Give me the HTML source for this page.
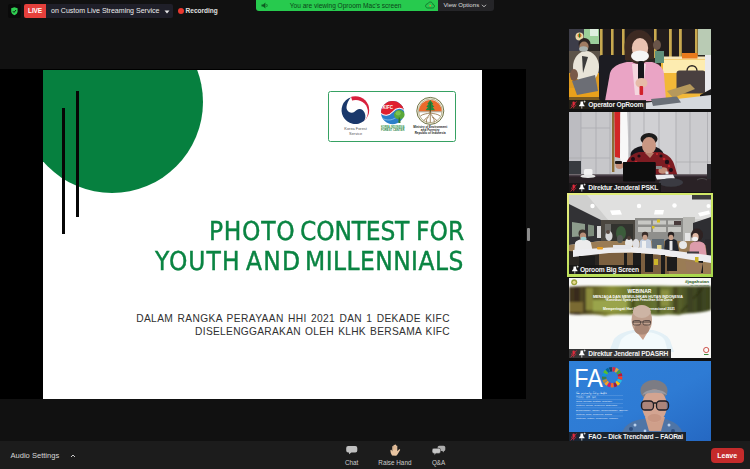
<!DOCTYPE html>
<html lang="en">
<head>
<meta charset="utf-8">
<title>Zoom Webinar - Photo Contest for Youth and Millennials</title>
<style>
html,body{margin:0;padding:0;}
body{width:750px;height:469px;background:#111111;position:relative;overflow:hidden;font-family:"Liberation Sans",Arial,sans-serif;color:#fff;}
.abs{position:absolute;}
/* top-left */
#shield{left:8px;top:4px;width:13px;height:14px;background:#0a0a0a;border-radius:2px;}
#live{left:24px;top:4px;width:22px;height:14px;background:#e5403c;border-radius:2px 0 0 2px;font-size:6.5px;font-weight:bold;line-height:14.4px;text-align:center;letter-spacing:-0.15px;}
#stream{left:46px;top:4px;width:127px;height:14px;background:#1f1f29;border-radius:0 2px 2px 0;font-size:7.05px;line-height:14px;color:#ececec;white-space:nowrap;}
#stream span{position:absolute;left:5px;top:0;}
#rec{left:185.6px;top:4px;height:14px;line-height:14px;font-size:6.5px;font-weight:bold;color:#e0e0e0;white-space:nowrap;}
#recdot{left:177.5px;top:8px;width:6px;height:6px;border-radius:50%;background:#e8392f;}
/* banner */
#banner{left:255.5px;top:0;width:183px;height:11.2px;background:#27ca4e;border-radius:0 0 0 3px;font-size:6.55px;line-height:11px;color:#0c4519;white-space:nowrap;}
#viewopt{left:438.4px;top:0;width:55.5px;height:11.1px;background:#252528;border-radius:0 0 3px 0;font-size:6.1px;line-height:10.6px;color:#dedede;white-space:nowrap;}
/* slide */
#stage{left:0;top:69.4px;width:526px;height:329.7px;background:#000;}
#slide{left:43.2px;top:0.5px;width:438.8px;height:328.7px;background:#fff;overflow:hidden;}
#circle{left:-22px;top:-59px;width:182px;height:182px;border-radius:50%;background:#06803f;}
.vline{background:#060606;width:2.6px;}
#logos{left:285px;top:21.5px;width:128px;height:51px;border:1.3px solid #36a162;border-radius:2.5px;box-sizing:border-box;background:#fff;}
.tw{position:absolute;color:#0a8442;font-family:"DejaVu Sans Condensed","DejaVu Sans","Liberation Sans",sans-serif;font-size:26px;line-height:30px;white-space:nowrap;-webkit-text-stroke:0.4px #0a8442;text-rendering:geometricPrecision;will-change:transform;}
.sub{position:absolute;color:#303030;font-size:10.2px;line-height:12px;white-space:nowrap;text-align:right;right:32px;}
#handle{left:527px;top:228px;width:2.6px;height:13px;background:#8c8c8c;border-radius:1px;}
/* thumbs */
.thumb{position:absolute;left:569px;width:142px;height:80px;overflow:hidden;background:#444;}
.thumb svg{position:absolute;left:0;top:0;}
.lbl{position:absolute;left:0;bottom:0;height:9.5px;background:rgba(22,22,22,.86);font-size:6.7px;line-height:9.6px;font-weight:bold;color:#f2f2f2;white-space:nowrap;padding:0 2.5px 0 19.3px;letter-spacing:-0.22px}
/* toolbar */
#toolbar{left:0;top:441px;width:750px;height:28px;background:#1c1c1c;}
.tl{position:absolute;font-size:6.35px;color:#cdcdcd;white-space:nowrap;transform:translateX(-50%);top:17.5px;line-height:8px;}
#leave{left:711px;top:7px;width:32.5px;height:15px;border-radius:4px;background:#c42b2b;font-size:7px;font-weight:bold;line-height:15px;text-align:center;color:#fff;}
</style>
</head>
<body>
<!-- top-left -->
<div id="shield" class="abs"><svg width="13" height="14" viewBox="0 0 13 14"><path d="M6.4 3.2 L9.6 4.3 V7.2 C9.6 9.2 8.2 10.5 6.4 11.2 C4.6 10.5 3.2 9.2 3.2 7.2 V4.3 Z" fill="#2fd052"/><path d="M4.9 7.2 L6 8.4 L8 6" stroke="#0a0a0a" stroke-width="0.9" fill="none"/></svg></div>
<div id="live" class="abs">LIVE</div>
<div id="stream" class="abs"><span>on Custom Live Streaming Service</span><svg class="abs" style="left:118px;top:5.5px" width="6" height="4" viewBox="0 0 6 4"><path d="M0.5 0.5 H5.5 L3 3.5 Z" fill="#e8e8e8"/></svg></div>
<div id="recdot" class="abs"></div>
<div id="rec" class="abs">Recording</div>
<!-- banner -->
<div id="banner" class="abs"><svg class="abs" style="left:5px;top:2px" width="9" height="7" viewBox="0 0 9 7"><path d="M0.5 2.4 H2.2 L4.4 0.6 V6.4 L2.2 4.6 H0.5 Z" fill="#0d5a20"/><path d="M5.6 2 Q6.8 3.5 5.6 5" stroke="#0d5a20" stroke-width="0.8" fill="none"/></svg><span class="abs" style="left:34.3px;top:0">You are viewing Oproom Mac's screen</span><svg class="abs" style="left:169px;top:1px" width="10" height="8" viewBox="0 0 10 8"><path d="M2.6 7 H7.6 C8.8 7 9.5 6.2 9.5 5.2 C9.5 4.2 8.8 3.6 7.9 3.5 C7.8 2 6.7 1 5.3 1 C4.1 1 3.2 1.7 2.8 2.8 C1.6 2.8 0.6 3.7 0.6 4.9 C0.6 6.1 1.5 7 2.6 7 Z" fill="none" stroke="#0f6a28" stroke-width="0.8"/><circle cx="5.2" cy="4.6" r="0.9" fill="#d88a30"/></svg></div>
<div id="viewopt" class="abs"><span class="abs" style="left:5px;top:0">View Options</span><svg class="abs" style="left:42.6px;top:3.6px" width="6" height="4" viewBox="0 0 6 4"><path d="M1 0.8 L3 2.8 L5 0.8" stroke="#e6e6e6" stroke-width="0.8" fill="none"/></svg></div>

<!-- shared screen -->
<div id="stage" class="abs">
 <div id="slide" class="abs">
  <div id="circle" class="abs"></div>
  <div class="abs vline" style="left:19.2px;top:38px;height:126px"></div>
  <div class="abs vline" style="left:33.2px;top:21px;height:126px"></div>
  <div id="logos" class="abs"><svg class="abs" style="left:-1.3px;top:-1.3px" width="128" height="51" viewBox="328 91.5 128 51">
   <!-- Korea Forest Service -->
   <g>
    <clipPath id="kr"><path d="M350.6 96 L372 96 L372 125 L364.3 122.3 L355 110 Z"/></clipPath><circle cx="355.4" cy="110.6" r="13.8" fill="#d8203c" clip-path="url(#kr)"/>
    <circle cx="355.8" cy="112.6" r="12.1" fill="#fff"/>
    <path d="M350.98 97.67 A13.8 13.8 0 1 0 363.94 121.55 C365.6 119.5 365.9 116 364.6 113.2 C363.5 110.8 361.5 109.3 359.5 109.5 C357.5 109.7 355.8 111.2 354.2 112.5 C352.8 113.4 350.5 113.4 349 112.4 C347.3 111.3 346.3 109.5 346.5 107.5 C346.8 104.5 348.2 100.7 350.98 97.67 Z" fill="#1a386b"/>
    <text x="355.6" y="130.3" font-size="3.9" fill="#555" text-anchor="middle" font-family="Liberation Sans, sans-serif">Korea Forest</text>
    <text x="355.6" y="135.4" font-size="3.9" fill="#555" text-anchor="middle" font-family="Liberation Sans, sans-serif">Service</text>
   </g>
   <!-- KIFC -->
   <g>
    <clipPath id="kc"><circle cx="392.6" cy="113.1" r="11.6"/></clipPath>
    <g clip-path="url(#kc)">
     <rect x="380" y="100" width="26" height="26" fill="#2b7fc9"/>
     <path d="M380 100 H406 V113 C402 106.5 396 108.5 392.5 112.5 C389 116.5 384 117 380 113 Z" fill="#e0202f"/>
     <path d="M380 113 C384 117 389 116.5 392.5 112.5 C396 108.5 402 106.5 406 113" stroke="#fff" stroke-width="1.1" fill="none"/>
     <path d="M382 118.5 C386 121.5 392 121 396 118" stroke="#9fd0f0" stroke-width="0.7" fill="none"/>
    </g>
    <ellipse cx="399.3" cy="115.2" rx="5.3" ry="4.7" fill="#5aa83a"/>
    <ellipse cx="398.2" cy="113.8" rx="2.6" ry="2.2" fill="#7cc24e"/>
    <path d="M398.7 118 L398.3 123.6 H400.5 L400 118 Z" fill="#2f7a2c"/>
    <text x="387.8" y="109.3" font-size="5.2" font-weight="bold" fill="#fff" text-anchor="middle" font-family="Liberation Sans, sans-serif" textLength="10.4" lengthAdjust="spacingAndGlyphs">KIFC</text>
    <text x="392.7" y="128.3" font-size="2.7" font-weight="bold" fill="#2c9046" text-anchor="middle" font-family="Liberation Sans, sans-serif" textLength="23.5" lengthAdjust="spacingAndGlyphs">KOREA-INDONESIA</text>
    <text x="392.7" y="131.2" font-size="2.9" font-weight="bold" fill="#1f7f3c" text-anchor="middle" font-family="Liberation Sans, sans-serif" textLength="23.5" lengthAdjust="spacingAndGlyphs">FOREST CENTER</text>
   </g>
   <!-- Ministry of Environment and Forestry -->
   <g>
    <circle cx="430.3" cy="111.4" r="13.5" fill="#f6f1e2" stroke="#6f7448" stroke-width="1"/>
    <circle cx="430.3" cy="111.4" r="11.8" fill="#fff" stroke="#8c8458" stroke-width="0.6"/>
    <path d="M418.9 111.8 A11.4 11.4 0 0 1 441.7 111.8 Z" fill="#ea6a2c"/>
    <path d="M430.3 100.6 L427.3 104.6 H428.5 L426.3 107.6 H428 L425.6 110.8 H435 L432.6 107.6 H434.3 L432.1 104.6 H433.3 Z" fill="#1f8a3c"/>
    <rect x="429.7" y="103" width="1.2" height="10" fill="#3a5a2a"/>
    <path d="M419 112.3 H441.6" stroke="#6b5a3a" stroke-width="0.6"/>
    <g stroke="#8a6a3c" stroke-width="0.8" fill="none">
     <path d="M430.3 112.5 C429.8 116 427 118 423.5 121.3"/>
     <path d="M430.3 112.5 C430.8 116 433.6 118 437.1 121.3"/>
     <path d="M430.3 112.5 V123.3"/>
     <path d="M429.6 113.5 C427 114.5 423.5 114 420.3 116.6"/>
     <path d="M431 113.5 C433.6 114.5 437.1 114 440.3 116.6"/>
     <path d="M428.6 117.3 C426.5 119 426 121 426.6 123"/>
     <path d="M432 117.3 C434.1 119 434.6 121 434 123"/>
    </g>
    <text x="430.2" y="128.6" font-size="3.1" font-weight="bold" fill="#222" text-anchor="middle" font-family="Liberation Sans, sans-serif" textLength="34" lengthAdjust="spacingAndGlyphs">Ministry of Environment</text>
    <text x="430.2" y="131.7" font-size="3.1" font-weight="bold" fill="#222" text-anchor="middle" font-family="Liberation Sans, sans-serif">and Forestry</text>
    <text x="430.2" y="134.9" font-size="3.1" font-weight="bold" fill="#222" text-anchor="middle" font-family="Liberation Sans, sans-serif" textLength="31" lengthAdjust="spacingAndGlyphs">Republic of Indonesia</text>
   </g>
  </svg></div>
  <span class="tw" id="w1" style="left:166.30px;top:146.8px;letter-spacing:0.70px">PHOTO</span>
  <span class="tw" id="w2" style="left:257.10px;top:146.8px;letter-spacing:-0.18px">CONTEST</span>
  <span class="tw" id="w3" style="left:373.00px;top:146.8px;letter-spacing:0.09px">FOR</span>
  <span class="tw" id="w4" style="left:111.60px;top:177.3px;letter-spacing:1.05px">YOUTH</span>
  <span class="tw" id="w5" style="left:202.40px;top:177.3px;letter-spacing:1.26px">AND</span>
  <span class="tw" id="w6" style="left:262.30px;top:177.3px;letter-spacing:0.46px">MILLENNIALS</span>
  <div class="sub" id="s1" style="top:243.6px;letter-spacing:0.4px;word-spacing:1px">DALAM RANGKA PERAYAAN HHI 2021 DAN 1 DEKADE KIFC</div>
  <div class="sub" id="s2" style="top:256.2px;letter-spacing:0.3px;word-spacing:1px">DISELENGGARAKAN OLEH KLHK BERSAMA KIFC</div>
 </div>
</div>
<div id="handle" class="abs"></div>

<!-- thumbnails -->
<div class="thumb" id="t1" style="top:29px"><svg width="142" height="80" viewBox="0 0 142 80">
 <defs><filter id="b1" x="-5%" y="-5%" width="110%" height="110%"><feGaussianBlur stdDeviation="0.55"/></filter></defs>
 <rect width="142" height="80" fill="#2b2723"/>
 <g filter="url(#b1)">
  <rect x="0" y="0" width="17" height="22" fill="#3d3d49"/>
  <rect x="15" y="0" width="16" height="15" fill="#9ccf9a"/>
  <rect x="21" y="0" width="8" height="7" fill="#dfeee0"/>
  <rect x="30" y="0" width="98" height="29" fill="#231f1c"/><circle cx="10.500" cy="7.500" r="4" fill="#e8d8a8"/><circle cx="10.500" cy="6.500" r="2" fill="#d8742a"/><rect x="10" y="4.500" width="1.200" height="4" fill="#2a7a2a"/>
  <g fill="#c9a94f">
   <rect x="31" y="0" width="2.6" height="29"/><rect x="42" y="0" width="2.6" height="29"/><rect x="53" y="0" width="2.6" height="26"/>
   <rect x="85" y="0" width="2.6" height="29"/><rect x="100" y="0" width="2.8" height="29"/><rect x="110" y="0" width="2.8" height="29"/><rect x="126" y="0" width="2.6" height="29"/>
  </g>
  <rect x="129" y="0" width="13" height="26" fill="#b9cbb4"/>
  <!-- yellow shelf -->
  <rect x="92" y="29" width="50" height="42" fill="#f2b838"/>
  <rect x="94" y="31" width="42" height="13" fill="#fdecb0"/>
  <rect x="92" y="27.5" width="50" height="3" fill="#f6e6b8"/>
  <rect x="113" y="24" width="15.5" height="5.5" fill="#e87a1c"/>
  <!-- bag -->
  <path d="M118 42 C118 35 128 35 128 42" stroke="#2c2523" stroke-width="1.4" fill="none"/>
  <rect x="107.5" y="41.5" width="29" height="23" rx="3" fill="#4a4140"/>
  <rect x="136" y="26" width="6" height="37" fill="#e9e9ec"/>
  <path d="M131 66 L142 60 V68 L131 70 Z" fill="#1f1c1c"/>
  <!-- left man -->
  <rect x="0" y="22" width="31" height="24" fill="#5c5248"/><rect x="0" y="44" width="33" height="18" fill="#dc9a24"/>
  <rect x="0" y="59" width="33" height="11" fill="#e9a11d"/>
  <rect x="0" y="68" width="33" height="12" fill="#7a5a20"/>
  <ellipse cx="17" cy="38" rx="13" ry="16" fill="#e8e4d8"/>
  <path d="M3 52 L26 46 L29 62 L8 66 Z" fill="#6c6e75"/>
  <circle cx="15.5" cy="15" r="6" fill="#2c2421"/>
  <ellipse cx="15" cy="17.5" rx="4.6" ry="5" fill="#a07a62"/>
  <ellipse cx="14.5" cy="20" rx="4.4" ry="2.8" fill="#a9b0ae"/>
  <path d="M13 27 L19 28 L14 44 Z" fill="#3a3a3a"/>
  <ellipse cx="5" cy="46" rx="4" ry="6" fill="#7a5a48"/>
  <!-- chair -->
  <rect x="30" y="26" width="27" height="46" rx="3" fill="#1c1c21"/>
  <!-- woman -->
  <path d="M36 72 L41 44 C43 37 52 34 58 33 H83 C90 35 94 38 95 45 L97 72 Z" fill="#eaa4c5"/>
  <path d="M63 35 H77 L73 66 H66 Z" fill="#f4d6de"/>
  <ellipse cx="70" cy="18" rx="14.5" ry="17" fill="#3c2922"/>
  <rect x="56" y="18" width="6" height="13" fill="#3c2922"/>
  <rect x="79" y="18" width="6" height="12" fill="#3c2922"/>
  <ellipse cx="71" cy="19" rx="8.2" ry="10" fill="#e9c2b0"/>
  <ellipse cx="71" cy="27" rx="9" ry="5.6" fill="#f5f5f5"/>
  <rect x="69" y="32" width="6" height="19" rx="2" fill="#19191b"/>
  <ellipse cx="72.5" cy="54" rx="6" ry="5" fill="#e6bba8"/>
  <rect x="70.5" y="57" width="3.6" height="9" rx="1" fill="#d1202c"/>
  <!-- right arm person at back -->
  <ellipse cx="88" cy="16" rx="4" ry="5" fill="#6a5448"/>
  <rect x="86" y="22" width="9" height="12" fill="#5f8f7a"/>
  <!-- table, laptop, folder -->
  <path d="M98 62 L121 55 L126 60 L104 69 Z" fill="#b6995b"/>
  <path d="M74 74 L142 66 V80 H74 Z" fill="#d5d9dd"/>
  <path d="M82 70 L108 67.5 L112 73.5 L84 77 Z" fill="#6b7078"/>
 </g>
</svg><div class="lbl"><svg class="abs" style="left:0;top:0" width="19" height="10" viewBox="0 0 19 10"><rect x="3.5" y="1.4" width="2.3" height="4.3" rx="1.1" fill="#e02a3c"/><path d="M2.5 4.6 C2.5 7.4 6.8 7.4 6.8 4.6 M4.65 6.8 V8.3" stroke="#e02a3c" stroke-width="0.7" fill="none"/><path d="M1.7 8.4 L7.5 1.5" stroke="#e02a3c" stroke-width="0.8"/><path d="M11.6 1.6 H14 L14.3 4.2 C15.2 4.8 15.6 5.4 15.6 6.2 H10 C10 5.4 10.4 4.8 11.3 4.2 Z" fill="#fff"/><path d="M12.8 6.2 V8.6" stroke="#fff" stroke-width="0.7"/><path d="M15.6 0.6 V2.6 M14.6 1.6 H16.6" stroke="#fff" stroke-width="0.6"/></svg>Operator OpRoom</div></div>
<div class="thumb" id="t2" style="top:112px"><svg width="142" height="80" viewBox="0 0 142 80">
 <defs><filter id="b2" x="-5%" y="-5%" width="110%" height="110%"><feGaussianBlur stdDeviation="0.5"/></filter></defs>
 <rect width="142" height="80" fill="#c7c7ca"/>
 <g filter="url(#b2)">
  <rect x="0" y="0" width="12" height="62" fill="#bcbcc1"/>
  <rect x="61" y="0" width="46" height="62" fill="#d0d0d3"/>
  <rect x="107" y="0" width="35" height="62" fill="#cbcbce"/>
  <g stroke="#a9a9ae" stroke-width="0.8">
   <path d="M12 0V62 M27 0V62 M41 0V62 M61 0V62 M75 0V40 M90 0V40 M107 0V62 M121 0V62 M138.5 0V62"/>
   <path d="M12 16H41 M0 46H41 M107 50H142" stroke-width="0.7"/>
  </g>
  <!-- flag -->
  <rect x="43" y="0" width="2.4" height="60" fill="#8c6d34"/>
  <path d="M45.4 0 H51.5 L51 46 L46 45 Z" fill="#d12525"/>
  <path d="M51.3 0 H58 C59 18 59.5 34 59 50 L52 52 L51 46 Z" fill="#f8f8f8"/>
  <!-- chair + man -->
  <ellipse cx="78" cy="43" rx="16.5" ry="9.5" fill="#17171b"/>
  <path d="M54 67 L58 49 C61 43 66 41 70 40 H91 C98 42 103 46 105 52 L109 65 L96 68 Z" fill="#7d1d24"/>
  <g fill="#1b1014"><circle cx="64" cy="47" r="2"/><circle cx="98" cy="50" r="2.2"/><circle cx="92" cy="44" r="1.6"/><circle cx="70" cy="44" r="1.6"/><circle cx="102" cy="58" r="2"/><circle cx="61" cy="55" r="1.8"/><circle cx="95" cy="60" r="1.6"/></g>
  <g fill="#c8262e"><circle cx="67" cy="50" r="1.3"/><circle cx="95" cy="47" r="1.3"/><circle cx="100" cy="54" r="1.2"/><circle cx="88" cy="42" r="1.1"/></g>
  <ellipse cx="80" cy="27" rx="8.5" ry="6" fill="#1f1a1a"/>
  <ellipse cx="80" cy="33.5" rx="7" ry="8.5" fill="#c99783"/>
  <path d="M76 41 H85 L81 46 Z" fill="#b8806c"/>
  <!-- laptop -->
  <rect x="54" y="50" width="32.5" height="19.5" rx="1" fill="#0c0c10"/>
  <ellipse cx="50.5" cy="53.5" rx="4" ry="3.4" fill="#c48e78"/>
  <rect x="46" y="49" width="7" height="3" rx="1" fill="#1a1414"/>
  <ellipse cx="94" cy="58.5" rx="4.5" ry="3.2" fill="#c48e78"/>
  <rect x="96.5" y="59.5" width="3" height="4" fill="#e0e0e0"/>
  <rect x="87" y="54" width="6" height="3" fill="#8a8a8a"/>
  <!-- desk -->
  <rect x="0" y="63" width="142" height="17" fill="#2b2327"/>
  <rect x="0" y="62.3" width="142" height="2" fill="#4a4146"/>
  <rect x="0" y="49" width="12" height="13" fill="#393b41"/>
  <rect x="15" y="57" width="8.5" height="6.5" rx="1.5" fill="#f2f2f2"/>
  <ellipse cx="19" cy="64.3" rx="7.5" ry="1.7" fill="#e6e6e6"/>
  <path d="M86 63 L104 62.5 L106 66.5 L88 67.5 Z" fill="#e9e9ec"/>
  <ellipse cx="102" cy="70.5" rx="12" ry="4.2" fill="#3a3b42"/>
  <rect x="138" y="52" width="4" height="15" fill="#29292d"/>
  <path d="M128 68 C131 66 135 66 138 68" stroke="#555" stroke-width="0.8" fill="none"/>
  <rect x="54" y="50" width="32.5" height="19.5" rx="1" fill="#0c0c10"/>
 </g>
</svg><div class="lbl"><svg class="abs" style="left:0;top:0" width="19" height="10" viewBox="0 0 19 10"><rect x="3.5" y="1.4" width="2.3" height="4.3" rx="1.1" fill="#e02a3c"/><path d="M2.5 4.6 C2.5 7.4 6.8 7.4 6.8 4.6 M4.65 6.8 V8.3" stroke="#e02a3c" stroke-width="0.7" fill="none"/><path d="M1.7 8.4 L7.5 1.5" stroke="#e02a3c" stroke-width="0.8"/><path d="M11.6 1.6 H14 L14.3 4.2 C15.2 4.8 15.6 5.4 15.6 6.2 H10 C10 5.4 10.4 4.8 11.3 4.2 Z" fill="#fff"/><path d="M12.8 6.2 V8.6" stroke="#fff" stroke-width="0.7"/><path d="M15.6 0.6 V2.6 M14.6 1.6 H16.6" stroke="#fff" stroke-width="0.6"/></svg>Direktur Jenderal PSKL</div></div>
<div class="abs" style="left:566.8px;top:192.7px;width:146.3px;height:84.2px;background:linear-gradient(160deg,#e9ef84 0%,#d2e868 35%,#b4dc54 75%,#a6d64c 100%)"></div>
<div class="thumb" id="t3" style="top:195.2px;height:79.3px;left:569.4px;width:141.2px"><svg width="142" height="80" viewBox="0 0 142 80">
 <defs><filter id="b3" x="-5%" y="-5%" width="110%" height="110%"><feGaussianBlur stdDeviation="0.5"/></filter></defs>
 <rect width="142" height="80" fill="#d3d3d1"/>
 <g filter="url(#b3)">
  <!-- ceiling -->
  <path d="M0 0 H142 V24 L114 24 L66 25 L32 25 L0 9 Z" fill="#e0e0df"/>
  <path d="M0 0 H18 L40 26 H32 L0 9 Z" fill="#cfcfce"/>
  <rect x="123" y="0" width="19" height="4.5" fill="#3c3c3c"/>
  <g fill="#ffffff">
   <circle cx="23.5" cy="11" r="2.2"/><circle cx="70" cy="11" r="2.2"/><circle cx="105.5" cy="10.5" r="2.2"/><circle cx="139.5" cy="11" r="2"/>
   <path d="M41 15.5 L51 15 L53 19.5 L43 20 Z"/><path d="M86 15 L95 15 L94 19.5 L85 19.500 Z"/><path d="M129 18 L140 15.500 L141 19 L131 21.500 Z"/>
   <rect x="50" y="25" width="6" height="2.4"/><rect x="80" y="26" width="8" height="2"/>
  </g>
  <!-- left wall -->
  <path d="M0 9 L32 25 V46 L0 50 Z" fill="#303034"/>
  <path d="M3 27 L16 29 V41 L3 42 Z" fill="#8d9c8c"/>
  <path d="M19 29.500 L25 30.500 V41 L19 41.500 Z" fill="#7d8c7c"/>
  <rect x="28" y="31" width="4" height="12" fill="#d8d8d8"/>
  <!-- back -->
  <rect x="32" y="25" width="34" height="24" fill="#4b4741"/>
  <rect x="36" y="29" width="6" height="14" fill="#6b6b66"/>
  <rect x="42" y="29" width="22" height="18" fill="#33312d"/>
  <ellipse cx="52" cy="38" rx="5" ry="7" fill="#3b5c3b"/>
  <!-- shelves -->
  <rect x="66" y="23" width="49" height="23" fill="#8f8f8c"/>
  <g fill="#c8c8c4"><rect x="69" y="25.500" width="13" height="4"/><rect x="84" y="25.500" width="13" height="4"/><rect x="99" y="25.500" width="13" height="4"/><rect x="69" y="32" width="13" height="5"/><rect x="84" y="32" width="13" height="5"/><rect x="99" y="32" width="13" height="5"/></g>
  <rect x="88" y="24.500" width="3" height="3" fill="#d8c020"/><rect x="83" y="31" width="2.500" height="2.500" fill="#d8c020"/>
  <rect x="105" y="26" width="7" height="4" fill="#4a3a3a"/>
  <!-- right wall -->
  <rect x="114" y="22" width="12" height="26" fill="#b9b9b5"/>
  <path d="M124 28 L142 22 V58 L124 52 Z" fill="#2d2d30"/>
  <rect x="116" y="38" width="5" height="9" fill="#e6e6e6"/>
  <!-- floor -->
  <path d="M0 50 L32 46 H124 L142 52 V80 H0 Z" fill="#9a7c54"/>
  <path d="M30 58 H100 V80 H30 Z" fill="#7c6040"/>
  <path d="M0 56 L30 58 V80 H0 Z" fill="#2b2521"/>
  <!-- people -->
  <ellipse cx="40" cy="41" rx="3.500" ry="5" fill="#d8d8d8"/><circle cx="39" cy="37" r="2" fill="#5a4a40"/>
  <ellipse cx="51" cy="44" rx="3" ry="4" fill="#555a55"/>
  <ellipse cx="60" cy="48" rx="4" ry="5" fill="#e8e8e8"/><circle cx="60" cy="43" r="2" fill="#4a3a34"/>
  <ellipse cx="67" cy="49" rx="3.500" ry="5" fill="#e0e0e4"/>
  <path d="M70 56 L71 46 C73 43 80 43 82 46 L83 56 Z" fill="#c4cede"/><rect x="73" y="46" width="4" height="10" fill="#f0f0f0"/>
  <circle cx="76" cy="40" r="3.200" fill="#3a2e2a"/><ellipse cx="76" cy="42.500" rx="2.400" ry="2.800" fill="#c8a08a"/>
  <rect x="83" y="44" width="12" height="12" fill="#5f6a72"/>
  <rect x="88" y="50" width="4.500" height="6" fill="#e8d890"/>
  <path d="M95 56 L96 46 C98 43 106 43 108 46 L110 56 Z" fill="#23262e"/><rect x="100.500" y="46" width="3" height="9" fill="#e8e8e8"/>
  <circle cx="102" cy="40" r="3.200" fill="#2a2422"/><ellipse cx="102" cy="42.500" rx="2.400" ry="2.800" fill="#c8a08a"/>
  <ellipse cx="114" cy="50" rx="4" ry="4" fill="#e8e8e8"/>
  <!-- left man -->
  <path d="M5 60 L6 48 C8 43 20 43 22 48 L24 58 Z" fill="#ececec"/>
  <circle cx="13.500" cy="38.500" r="4" fill="#3a302c"/><ellipse cx="14" cy="41" rx="3.200" ry="3.600" fill="#b89078"/><ellipse cx="14.500" cy="43.500" rx="3" ry="1.800" fill="#9ed0d0"/>
  <!-- right woman -->
  <path d="M120 62 L121 50 C123 45 134 45 136 50 L138 62 Z" fill="#dc9cab"/>
  <ellipse cx="128" cy="40" rx="6" ry="6.500" fill="#2e2220"/><ellipse cx="126.500" cy="42" rx="3.200" ry="4" fill="#e0b8a4"/><ellipse cx="126" cy="44" rx="3" ry="2.200" fill="#f2f2f2"/>
  <path d="M136 44 H142 V62 H138 Z" fill="#2a2a2e"/>
  <!-- table -->
  <path d="M4 55 L40 52.500 L62 52 L92 54 L142 60.500 V68 L88 59.500 L62 57.500 L40 58 L4 62 Z" fill="#ededf0"/>
  <path d="M44 50 L62 50 V54 H44 Z" fill="#e4e4e8"/>
  <rect x="28" y="52" width="6" height="2.500" rx="1" fill="#e8a020"/>
  <rect x="118" y="56.500" width="12" height="2" fill="#3a3a40"/>
  <!-- chairs / legs -->
  <g fill="#1e1c1c"><rect x="10" y="61" width="16" height="14"/><rect x="55" y="58" width="3" height="16"/><rect x="64" y="58" width="8" height="18"/><rect x="76" y="59" width="8" height="18"/><rect x="92" y="60" width="4" height="20"/><rect x="98" y="62" width="10" height="14"/><rect x="126" y="66" width="8" height="12"/></g>
  <g fill="#cdb62a"><rect x="85" y="64" width="4" height="6"/><rect x="126" y="62" width="3.500" height="8"/></g>
  <path d="M116 66 L134 68 L132 78 H118 Z" fill="#9a7a5a"/>
 </g>
</svg><div class="lbl" style="padding-left:10.5px"><svg class="abs" style="left:-7.5px;top:0" width="19" height="10" viewBox="0 0 19 10"><path d="M11.6 1.6 H14 L14.3 4.2 C15.2 4.8 15.6 5.4 15.6 6.2 H10 C10 5.4 10.4 4.8 11.3 4.2 Z" fill="#fff"/><path d="M12.8 6.2 V8.6" stroke="#fff" stroke-width="0.7"/><path d="M15.6 0.6 V2.6 M14.6 1.6 H16.6" stroke="#fff" stroke-width="0.6"/></svg>Oproom Big Screen</div></div>
<div class="thumb" id="t4" style="top:278px"><svg width="142" height="80" viewBox="0 0 142 80">
 <defs><filter id="b4" x="-5%" y="-5%" width="110%" height="110%"><feGaussianBlur stdDeviation="0.6"/></filter>
 <filter id="b4b" x="-5%" y="-20%" width="110%" height="140%"><feGaussianBlur stdDeviation="0.9"/></filter>
 <linearGradient id="g4" x1="0" y1="0" x2="1" y2="0"><stop offset="0" stop-color="#3f321b"/><stop offset="0.140" stop-color="#5a5424"/><stop offset="0.300" stop-color="#8a9038"/><stop offset="0.500" stop-color="#5c6a2c"/><stop offset="0.700" stop-color="#6c7634"/><stop offset="0.850" stop-color="#454d22"/><stop offset="1" stop-color="#3a421f"/></linearGradient></defs>
 <rect width="142" height="80" fill="#f9f9f7"/>
 <g filter="url(#b4b)">
  <path d="M0 9 C20 7 40 8.500 60 8 C90 7.500 120 8.500 142 8 V32 C130 36 120 34 110 37 C96 35 90 39 76 36 C60 38 50 35 36 38 C22 35 10 38 0 36 Z" fill="url(#g4)"/>
  <rect x="5" y="9" width="6" height="27" fill="#382c1a"/><rect x="14" y="9" width="3" height="26" fill="#4a4020"/><rect x="17" y="10" width="7" height="22" fill="#8c8c3e"/><rect x="62" y="9" width="4" height="24" fill="#48501f"/><rect x="88" y="9" width="3" height="26" fill="#454a20"/><rect x="92" y="12" width="8" height="16" fill="#8a9040"/><rect x="104" y="9" width="5" height="26" fill="#4a4a22"/><rect x="128" y="9" width="5" height="25" fill="#343a1a"/><path d="M112 34 L134 10" stroke="#2e3016" stroke-width="1.5"/><rect x="24" y="22" width="34" height="11" fill="#9aa44c"/><rect x="0" y="24" width="14" height="10" fill="#7a6a30"/><rect x="118" y="10" width="6" height="24" fill="#3d4322"/>
 </g>
 <circle cx="5.200" cy="4.300" r="3" fill="#9aa23c"/><circle cx="5.200" cy="4.300" r="1.600" fill="#e8d890"/>
 <g font-family="Liberation Sans, sans-serif" font-weight="bold" fill="#2e5a1e" font-size="3.200"><text x="116" y="5" textLength="24" lengthAdjust="spacingAndGlyphs">#jagahutan</text><text x="121" y="7.800" font-size="1.800" font-weight="normal" textLength="19">Hari Hutan Internasional</text></g>
 <g font-family="Liberation Sans, sans-serif" fill="#fff" text-anchor="middle" font-weight="bold">
  <text x="70.500" y="14.500" font-size="4.600" textLength="24" lengthAdjust="spacingAndGlyphs">WEBINAR</text>
  <text x="69" y="19.500" font-size="3.300" textLength="90" lengthAdjust="spacingAndGlyphs">MENJAGA DAN MEMULIHKAN HUTAN INDONESIA</text>
  <text x="70.500" y="23.300" font-size="2.900" font-style="italic" textLength="69" lengthAdjust="spacingAndGlyphs">“Kontribusi Nyata pada Pemulihan Iklim Dunia”</text>
  <text x="70" y="31.500" font-size="3.100" textLength="72" lengthAdjust="spacingAndGlyphs">Memperingati Hari Hutan Internasional 2021</text>
 </g>
 <g filter="url(#b4)">
  <path d="M40 74 L45 61 C50 55 58 53 64 52 H84 C92 54 98 57 101 62 L105 74 Z" fill="#e3f0f6"/>
  <path d="M48 74 L52 62 C56 57 62 55 66 54.500 H82 C88 56 94 58 96 63 L99 74 Z" fill="#f3fafc"/>
  <path d="M66 52 H80 L74 62 Z" fill="#c9a08c"/>
  <ellipse cx="72.800" cy="42" rx="10.200" ry="14.800" fill="#bf9f8d"/>
  <ellipse cx="72.800" cy="33.500" rx="9" ry="6.500" fill="#cdb4a4"/>
  <ellipse cx="72.800" cy="51" rx="7.500" ry="5.500" fill="#aa8775"/>
  <path d="M63.500 44 H82" stroke="#5a4a44" stroke-width="1.100"/>
  <rect x="64" y="42.500" width="7.500" height="4.500" rx="1.500" fill="none" stroke="#4a3c38" stroke-width="0.800"/>
  <rect x="74" y="42.500" width="7.500" height="4.500" rx="1.500" fill="none" stroke="#4a3c38" stroke-width="0.800"/>
  <circle cx="137.200" cy="72" r="2.600" fill="none" stroke="#c8423a" stroke-width="0.900"/><path d="M135 76.500 H139.500" stroke="#3a8a3a" stroke-width="1"/>
 </g>
</svg><div class="lbl"><svg class="abs" style="left:0;top:0" width="19" height="10" viewBox="0 0 19 10"><rect x="3.5" y="1.4" width="2.3" height="4.3" rx="1.1" fill="#e02a3c"/><path d="M2.5 4.6 C2.5 7.4 6.8 7.4 6.8 4.6 M4.65 6.8 V8.3" stroke="#e02a3c" stroke-width="0.7" fill="none"/><path d="M1.7 8.4 L7.5 1.5" stroke="#e02a3c" stroke-width="0.8"/><path d="M11.6 1.6 H14 L14.3 4.2 C15.2 4.8 15.6 5.4 15.6 6.2 H10 C10 5.4 10.4 4.8 11.3 4.2 Z" fill="#fff"/><path d="M12.8 6.2 V8.6" stroke="#fff" stroke-width="0.7"/><path d="M15.6 0.6 V2.6 M14.6 1.6 H16.6" stroke="#fff" stroke-width="0.6"/></svg>Direktur Jenderal PDASRH</div></div>
<div class="thumb" id="t5" style="top:361px"><svg width="142" height="80" viewBox="0 0 142 80">
 <defs><filter id="b5" x="-5%" y="-5%" width="110%" height="110%"><feGaussianBlur stdDeviation="0.5"/></filter>
 <linearGradient id="g5" x1="0" y1="0" x2="1" y2="1"><stop offset="0" stop-color="#2f80d8"/><stop offset="0.55" stop-color="#2e7bd4"/><stop offset="1" stop-color="#2568c2"/></linearGradient></defs>
 <rect width="142" height="80" fill="url(#g5)"/>
 <text x="5.2" y="26.2" font-family="Liberation Sans, sans-serif" font-size="26.5" fill="#fff" textLength="28.5" lengthAdjust="spacingAndGlyphs">FA</text>
 <g filter="url(#b5)">
   <path d="M43.51 6.00 A10.2 10.2 0 0 1 46.60 6.58 L45.13 10.73 A5.8 5.8 0 0 0 43.37 10.40 Z" fill="#e5243b"/>
   <path d="M47.17 6.80 A10.2 10.2 0 0 1 49.84 8.46 L46.98 11.80 A5.8 5.8 0 0 0 45.46 10.86 Z" fill="#dda63a"/>
   <path d="M50.29 8.87 A10.2 10.2 0 0 1 52.19 11.38 L48.31 13.46 A5.8 5.8 0 0 0 47.23 12.03 Z" fill="#4c9f38"/>
   <path d="M52.46 11.93 A10.2 10.2 0 0 1 53.32 14.95 L48.96 15.49 A5.8 5.8 0 0 0 48.47 13.77 Z" fill="#c5192d"/>
   <path d="M53.38 15.56 A10.2 10.2 0 0 1 53.09 18.70 L48.82 17.62 A5.8 5.8 0 0 0 48.99 15.84 Z" fill="#ff3a21"/>
   <path d="M52.92 19.28 A10.2 10.2 0 0 1 51.52 22.10 L47.93 19.55 A5.8 5.8 0 0 0 48.73 17.95 Z" fill="#26bde2"/>
   <path d="M51.15 22.59 A10.2 10.2 0 0 1 48.83 24.71 L46.40 21.04 A5.8 5.8 0 0 0 47.72 19.83 Z" fill="#fcc30b"/>
   <path d="M48.31 25.03 A10.2 10.2 0 0 1 45.37 26.17 L44.44 21.87 A5.8 5.8 0 0 0 46.10 21.22 Z" fill="#a21942"/>
   <path d="M44.77 26.28 A10.2 10.2 0 0 1 41.63 26.28 L42.31 21.93 A5.8 5.8 0 0 0 44.09 21.93 Z" fill="#fd6925"/>
   <path d="M41.03 26.17 A10.2 10.2 0 0 1 38.09 25.03 L40.30 21.22 A5.8 5.8 0 0 0 41.96 21.87 Z" fill="#dd1367"/>
   <path d="M37.57 24.71 A10.2 10.2 0 0 1 35.25 22.59 L38.68 19.83 A5.8 5.8 0 0 0 40.00 21.04 Z" fill="#fd9d24"/>
   <path d="M34.88 22.10 A10.2 10.2 0 0 1 33.48 19.28 L37.67 17.95 A5.8 5.8 0 0 0 38.47 19.55 Z" fill="#bf8b2e"/>
   <path d="M33.31 18.70 A10.2 10.2 0 0 1 33.02 15.56 L37.41 15.84 A5.8 5.8 0 0 0 37.58 17.62 Z" fill="#3f7e44"/>
   <path d="M33.08 14.95 A10.2 10.2 0 0 1 33.94 11.93 L37.93 13.77 A5.8 5.8 0 0 0 37.44 15.49 Z" fill="#0a97d9"/>
   <path d="M34.21 11.38 A10.2 10.2 0 0 1 36.11 8.87 L39.17 12.03 A5.8 5.8 0 0 0 38.09 13.46 Z" fill="#56c02b"/>
   <path d="M36.56 8.46 A10.2 10.2 0 0 1 39.23 6.80 L40.94 10.86 A5.8 5.8 0 0 0 39.42 11.80 Z" fill="#00689d"/>
   <path d="M39.80 6.58 A10.2 10.2 0 0 1 42.89 6.00 L43.03 10.40 A5.8 5.8 0 0 0 41.27 10.73 Z" fill="#19486a"/>
 </g>
 <g font-family="Liberation Sans, sans-serif" fill="#e6f0fb" font-size="2.5">
  <text x="7" y="33">حافِظ، وغذِّ، واستدِم. معًا</text>
  <text x="7" y="37.3" font-size="2.4">共同成长、滋养、持续。</text>
  <text x="7" y="41" >Grow, nourish, sustain. Together.</text>
  <text x="7" y="45">Cultiver, nourrir, préserver. Ensemble.</text>
  <text x="7" y="49.500">Выращивать, питать, поддерживать. Вместе.</text>
  <text x="7" y="53.500">Cultivar, nutrir, preservar. Juntos.</text>
  <text x="7" y="57.500">Coltivare, nutrire, preservare. Insieme.</text>
 </g>
 <g stroke="#9cc4f0" stroke-width="0.25"><path d="M7 34.500H54 M7 38.500H54 M7 42.500H54 M7 46.800H54 M7 51H54 M7 55H54"/></g>
 <g filter="url(#b5)">
  <path d="M48 80 L56 66 C62 60 70 58 76 58 H96 C104 60 110 64 113 70 L117 80 Z" fill="#4f74a6"/>
  <g fill="#2f4f84"><circle cx="62" cy="68" r="2"/><circle cx="70" cy="74" r="2"/><circle cx="104" cy="70" r="2"/><circle cx="96" cy="76" r="2"/><circle cx="110" cy="77" r="1.800"/><circle cx="58" cy="76" r="1.800"/></g>
  <g fill="#b8d0ec"><circle cx="66" cy="64" r="1.500"/><circle cx="100" cy="64" r="1.500"/><circle cx="76" cy="70" r="1.400"/><circle cx="106" cy="74" r="1.300"/></g>
  <path d="M76 56 H96 L92 70 H80 Z" fill="#cf9f8a"/>
  <ellipse cx="85" cy="29.500" rx="13.500" ry="10.500" fill="#7c7c84"/>
  <ellipse cx="85.500" cy="45" rx="12.300" ry="16.500" fill="#d3a491"/>
  <path d="M73.500 34 C76 27 95 27 98 34 C92 31 80 31 73.500 34 Z" fill="#9a9aa2"/>
  <ellipse cx="85.500" cy="57" rx="7" ry="4" fill="#c89682"/>
  <rect x="72.500" y="40" width="12" height="9" rx="3.500" fill="#8a6a68" fill-opacity="0.55" stroke="#1d1c24" stroke-width="1.300"/>
  <rect x="87.500" y="40" width="12" height="9" rx="3.500" fill="#8a6a68" fill-opacity="0.55" stroke="#1d1c24" stroke-width="1.300"/>
  <path d="M84.500 42 H87.500" stroke="#17171d" stroke-width="1.500"/>
 </g>
</svg><div class="lbl"><svg class="abs" style="left:0;top:0" width="19" height="10" viewBox="0 0 19 10"><rect x="3.5" y="1.4" width="2.3" height="4.3" rx="1.1" fill="#e02a3c"/><path d="M2.5 4.6 C2.5 7.4 6.8 7.4 6.8 4.6 M4.65 6.8 V8.3" stroke="#e02a3c" stroke-width="0.7" fill="none"/><path d="M1.7 8.4 L7.5 1.5" stroke="#e02a3c" stroke-width="0.8"/><path d="M11.6 1.6 H14 L14.3 4.2 C15.2 4.8 15.6 5.4 15.6 6.2 H10 C10 5.4 10.4 4.8 11.3 4.2 Z" fill="#fff"/><path d="M12.8 6.2 V8.6" stroke="#fff" stroke-width="0.7"/><path d="M15.6 0.6 V2.6 M14.6 1.6 H16.6" stroke="#fff" stroke-width="0.6"/></svg>FAO – Dick Trenchard – FAORai</div></div>

<!-- toolbar -->
<div id="toolbar" class="abs">
 <span class="abs" style="left:10.5px;top:9.9px;font-size:7.55px;line-height:9px;color:#d8d8d8;white-space:nowrap">Audio Settings</span>
 <svg class="abs" style="left:70px;top:12.5px" width="6" height="4" viewBox="0 0 6 4"><path d="M1 3 L3 1 L5 3" stroke="#dcdcdc" stroke-width="0.9" fill="none"/></svg>
 <svg class="abs" style="left:340px;top:0" width="110" height="17" viewBox="340 441 110 17">
  <path d="M348.2 446 H355.3 Q357.3 446 357.3 448 V450.4 Q357.3 452.4 355.3 452.4 H351.4 L349 454.3 V452.4 H348.2 Q346.2 452.4 346.2 450.4 V448 Q346.2 446 348.2 446 Z" fill="#c0c0c0"/>
  <g fill="#e9c5a1">
   <path d="M392.1 455.6 C391 454 390.6 452.6 390.4 450.6 C390.3 449.6 391.3 449.4 391.7 450.2 L392.3 451.4 V446.6 C392.3 445.8 393.5 445.8 393.5 446.6 V445.5 C393.5 444.6 394.8 444.6 394.8 445.5 V445.1 C394.8 444.3 396.1 444.3 396.1 445.1 V446.1 C396.1 445.4 397.3 445.4 397.3 446.1 V451.3 L398.9 449.5 C399.6 448.8 400.5 449.5 400 450.3 L397.6 454.2 C397.1 455 396.6 455.7 395.6 455.7 Z"/>
  </g>
  <path d="M393.5 446.6 V449.6 M394.8 446 V449.6 M396.1 446.3 V449.6" stroke="#b98f6c" stroke-width="0.35" fill="none"/>
  <path d="M439.3 445.7 H443.6 Q445.3 445.7 445.3 447.3 V449.5 Q445.3 451 443.8 451 V452.6 L442.2 451 H439.3 Q437.6 451 437.6 449.5 V447.3 Q437.6 445.7 439.3 445.7 Z" fill="#adadad"/>
  <path d="M433.8 448.3 H438.9 Q440.6 448.3 440.6 449.9 V451.8 Q440.6 453.4 438.9 453.4 H436 L434.2 455.2 V453.4 H433.8 Q432.1 453.4 432.1 451.8 V449.9 Q432.1 448.3 433.8 448.3 Z" fill="#c6c6c6" stroke="#1c1c1c" stroke-width="0.5"/>
 </svg>
 <span class="tl" style="left:351.6px">Chat</span>
 <span class="tl" style="left:394.9px">Raise Hand</span>
 <span class="tl" style="left:438.6px">Q&amp;A</span>
 <div id="leave" class="abs">Leave</div>
</div>
</body>
</html>
